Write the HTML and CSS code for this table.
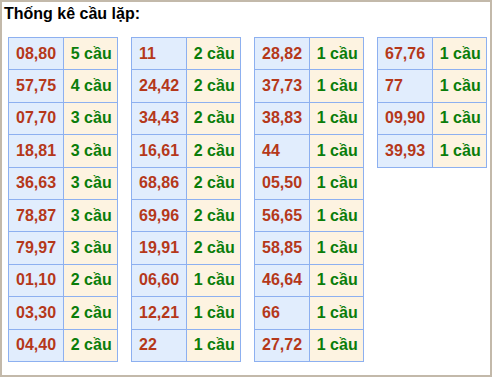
FILE: index.html
```html
<!DOCTYPE html>
<html lang="vi">
<head>
<meta charset="utf-8">
<link rel="stylesheet" href="styles.css">
</head>
<body>
<div class="box">
  <div class="title">Thống kê cầu lặp:</div>
  <div class="tables">
    <table class="tk">
      <tr><td class="n">08,80</td><td class="c">5 cầu</td></tr>
      <tr><td class="n">57,75</td><td class="c">4 cầu</td></tr>
      <tr><td class="n">07,70</td><td class="c">3 cầu</td></tr>
      <tr><td class="n">18,81</td><td class="c">3 cầu</td></tr>
      <tr><td class="n">36,63</td><td class="c">3 cầu</td></tr>
      <tr><td class="n">78,87</td><td class="c">3 cầu</td></tr>
      <tr><td class="n">79,97</td><td class="c">3 cầu</td></tr>
      <tr><td class="n">01,10</td><td class="c">2 cầu</td></tr>
      <tr><td class="n">03,30</td><td class="c">2 cầu</td></tr>
      <tr><td class="n">04,40</td><td class="c">2 cầu</td></tr>
    </table>
    <table class="tk">
      <tr><td class="n">11</td><td class="c">2 cầu</td></tr>
      <tr><td class="n">24,42</td><td class="c">2 cầu</td></tr>
      <tr><td class="n">34,43</td><td class="c">2 cầu</td></tr>
      <tr><td class="n">16,61</td><td class="c">2 cầu</td></tr>
      <tr><td class="n">68,86</td><td class="c">2 cầu</td></tr>
      <tr><td class="n">69,96</td><td class="c">2 cầu</td></tr>
      <tr><td class="n">19,91</td><td class="c">2 cầu</td></tr>
      <tr><td class="n">06,60</td><td class="c">1 cầu</td></tr>
      <tr><td class="n">12,21</td><td class="c">1 cầu</td></tr>
      <tr><td class="n">22</td><td class="c">1 cầu</td></tr>
    </table>
    <table class="tk">
      <tr><td class="n">28,82</td><td class="c">1 cầu</td></tr>
      <tr><td class="n">37,73</td><td class="c">1 cầu</td></tr>
      <tr><td class="n">38,83</td><td class="c">1 cầu</td></tr>
      <tr><td class="n">44</td><td class="c">1 cầu</td></tr>
      <tr><td class="n">05,50</td><td class="c">1 cầu</td></tr>
      <tr><td class="n">56,65</td><td class="c">1 cầu</td></tr>
      <tr><td class="n">58,85</td><td class="c">1 cầu</td></tr>
      <tr><td class="n">46,64</td><td class="c">1 cầu</td></tr>
      <tr><td class="n">66</td><td class="c">1 cầu</td></tr>
      <tr><td class="n">27,72</td><td class="c">1 cầu</td></tr>
    </table>
    <table class="tk">
      <tr><td class="n">67,76</td><td class="c">1 cầu</td></tr>
      <tr><td class="n">77</td><td class="c">1 cầu</td></tr>
      <tr><td class="n">09,90</td><td class="c">1 cầu</td></tr>
      <tr><td class="n">39,93</td><td class="c">1 cầu</td></tr>
    </table>
  </div>
</div>
</body>
</html>
```

FILE: styles.css
```css
html, body {
  margin: 0;
  padding: 0;
  background: #ffffff;
}
body {
  font-family: "Liberation Sans", Arial, sans-serif;
}
.box {
  box-sizing: border-box;
  width: 492px;
  height: 377px;
  border: 2px solid #c3b9aa;
  padding: 2px 0 0 2px;
}
.title {
  font-size: 16px;
  font-weight: bold;
  color: #000;
  line-height: 20px;
  height: 33px;
}
.tables {
  display: flex;
  align-items: flex-start;
  gap: 13px;
  padding-left: 4px;
}
.tk {
  border-collapse: collapse;
  width: 110px;
}
.tk td {
  border: 1px solid #8db0f0;
  height: 32.4px;
  padding: 0 0 0 7px;
  width: 55px;
  box-sizing: border-box;
  font-size: 16px;
  font-weight: bold;
  vertical-align: middle;
}
.tk td.n {
  background: #e1edfd;
  color: #b5381a;
}
.tk td.c {
  background: #fdf3e1;
  color: #0a7d0a;
}
```
